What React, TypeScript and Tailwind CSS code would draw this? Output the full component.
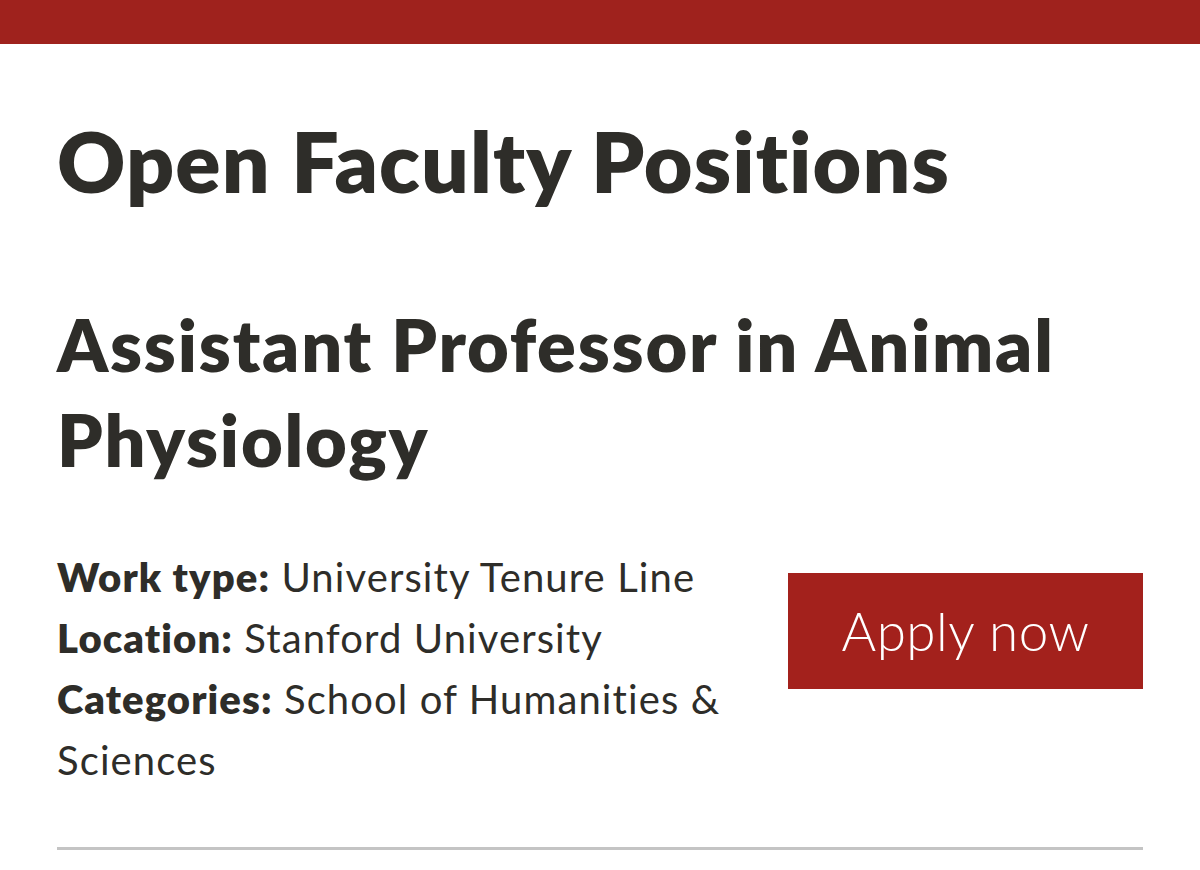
export default function App() {
    return (
        <div className="min-h-[870px] bg-white text-[#2e2d29]" style={{ fontFamily: 'Lato, "Noto Sans", sans-serif' }}>
            <div className="h-[44px] bg-[#9f221d]" />

            <div className="px-[57px]">
                <h1 className="mt-[76px] text-[84px] leading-[82px] font-extrabold tracking-[1.1px]">
                    Open Faculty Positions
                </h1>

                <h2 className="mt-[95px] text-[72px] leading-[95px] font-extrabold tracking-[1.8px]">
                    Assistant Professor in Animal Physiology
                </h2>

                <div className="mt-[60px] flex items-start gap-[40px]">
                    <div className="flex-1 text-[40px] leading-[61px] tracking-[1.1px]">
                        <p><span className="font-extrabold">Work type:</span> University Tenure Line</p>
                        <p><span className="font-extrabold">Location:</span> Stanford University</p>
                        <p><span className="font-extrabold">Categories:</span> School of Humanities &amp; Sciences</p>
                    </div>
                    <button
                        type="button"
                        className="mt-[26px] w-[355px] h-[116px] shrink-0 bg-[#a3211c] text-white text-[53px] font-light tracking-[0.5px]"
                    >
                        Apply now
                    </button>
                </div>

                <div className="mt-[56px] border-t-[3px] border-[#c4c4c4]" />
            </div>
        </div>
    );
}
